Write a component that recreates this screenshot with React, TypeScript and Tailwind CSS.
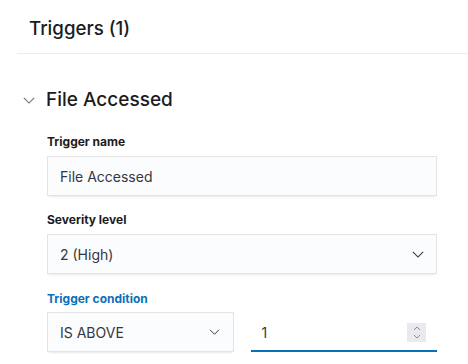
import React from "react";

const font = { fontFamily: "Inter, 'Noto Sans', sans-serif" };

function Chevron({ className = "" }: { className?: string }) {
  return (
    <svg width="14" height="8" viewBox="0 0 14 8" className={className} fill="none">
      <path d="M1 1 L7 7 L13 1" stroke="currentColor" strokeWidth="1.3" />
    </svg>
  );
}

const fieldShadow =
  "shadow-[0_1px_1px_-1px_rgba(152,162,179,0.2),0_3px_2px_-2px_rgba(152,162,179,0.2),inset_0_0_0_1px_rgba(16,22,26,0.1)]";

export default function App() {
  return (
    <div className="w-[468px] h-[364px] bg-white overflow-hidden text-[#343741]" style={font}>
      <div className="pl-[29px] h-[53px] flex items-center">
        <h2 className="text-[18.7px] font-medium text-[#1a1c21] leading-[24px] mt-[4px]">Triggers (1)</h2>
      </div>
      <div className="ml-[17px] h-px bg-[#e9edf3]" />
      <div className="pl-[23px] mt-[34px] flex items-center h-[24px]">
        <Chevron className="text-[#69707d] w-[12px] h-[7px]" />
        <span className="ml-[11px] text-[19px] font-medium text-[#1a1c21] leading-[24px]">File Accessed</span>
      </div>
      <div className="ml-[47px] w-[390px] mt-[20px] flex flex-col">
        <label className="text-[12px] font-bold text-[#1a1c21] leading-[20px] h-[20px]">Trigger name</label>
        <div className={`mt-[4px] h-[40px] bg-[#fbfcfd] ${fieldShadow} flex items-center px-[13px] text-[14px]`}>
          File Accessed
        </div>
        <label className="mt-[14px] text-[12px] font-bold text-[#1a1c21] leading-[20px] h-[20px]">Severity level</label>
        <div className={`mt-[4px] h-[40px] bg-[#fbfcfd] ${fieldShadow} flex items-center justify-between pl-[13px] pr-[13px] text-[14px]`}>
          <span>2 (High)</span>
          <Chevron className="text-[#343741] w-[12px] h-[7px]" />
        </div>
        <label className="mt-[15px] text-[12px] font-bold text-[#0b6fb8] leading-[20px] h-[20px]">Trigger condition</label>
        <div className="mt-[3px] grid grid-cols-2 gap-[17px]">
          <div className={`h-[40px] bg-[#fbfcfd] ${fieldShadow} flex items-center justify-between pl-[13px] pr-[14px] text-[14px]`}>
            <span>IS ABOVE</span>
            <Chevron className="text-[#343741] w-[11px] h-[6px]" />
          </div>
          <div className="relative h-[40px] bg-white flex items-center pl-[11px] pr-[11px] text-[14px]">
            <span>1</span>
            <div className="ml-auto w-[19px] h-[19px] bg-[#e9e9ee] flex flex-col items-center justify-center gap-[3px] text-[#8a8e96]">
              <svg width="8" height="5" viewBox="0 0 8 5" fill="none">
                <path d="M1 4 L4 1 L7 4" stroke="currentColor" strokeWidth="1" />
              </svg>
              <svg width="8" height="5" viewBox="0 0 8 5" fill="none">
                <path d="M1 1 L4 4 L7 1" stroke="currentColor" strokeWidth="1" />
              </svg>
            </div>
            <div className="absolute left-0 right-0 bottom-0 h-[2px] bg-[#0b6fb8]" />
          </div>
        </div>
      </div>
    </div>
  );
}
